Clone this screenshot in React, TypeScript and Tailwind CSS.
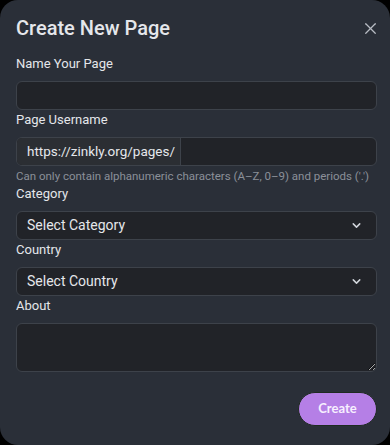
import { X, ChevronDown } from "lucide-react";

const inputBox =
  "w-full rounded-md border border-[#3d424a] bg-[#212328] text-[14px] text-[#e5e7eb] outline-none";

function Label({ children }: { children: React.ReactNode }) {
  return <label className="block text-[13px] leading-5 text-[#e4e6ea]">{children}</label>;
}

function SelectBox({ placeholder }: { placeholder: string }) {
  return (
    <div className={`${inputBox} h-[29px] mt-[7px] flex items-center justify-between pl-[10px] pr-[13px]`}>
      <span>{placeholder}</span>
      <ChevronDown className="w-[13px] h-[13px] text-[#d1d5db]" strokeWidth={2.75} />
    </div>
  );
}

export default function App() {
  return (
    <div className="w-[390px] h-[445px] bg-black" style={{ fontFamily: "Roboto, 'Noto Sans', sans-serif" }}>
      <div className="h-full rounded-[18px] bg-[#2a2f38] pl-4 pr-[13px] pt-[14px] flex flex-col">
        <div className="flex items-center justify-between">
          <h2 className="text-[20px] leading-7 font-medium text-[#e5e7eb]">Create New Page</h2>
          <X className="w-[19px] h-[19px] text-[#b8bcc4] mr-[-3px]" strokeWidth={1.6} />
        </div>

        <div className="mt-3">
          <Label>Name Your Page</Label>
          <div className={`${inputBox} h-[29px] mt-[7px]`} />
        </div>

        <div>
          <Label>Page Username</Label>
          <div className={`${inputBox} h-[29px] mt-[7px] flex overflow-hidden`}>
            <span className="w-[164px] flex items-center pl-[10px] text-[13.5px] bg-[#2b2e33] border-r border-[#3d424a] shrink-0">
              https://zinkly.org/pages/
            </span>
            <span className="flex-1" />
          </div>
          <p className="mt-[2px] text-[11.5px] leading-4 text-[#8b9099]">
            Can only contain alphanumeric characters (A–Z, 0–9) and periods ('.')
          </p>
        </div>

        <div>
          <Label>Category</Label>
          <SelectBox placeholder="Select Category" />
        </div>

        <div>
          <Label>Country</Label>
          <SelectBox placeholder="Select Country" />
        </div>

        <div>
          <Label>About</Label>
          <textarea className={`${inputBox} mt-[7px] block h-[49px]`} />
        </div>

        <div className="flex justify-end mt-5">
          <button
            className="h-[34px] w-[79px] rounded-full bg-[#b57fe6] border border-[#1f2a22] text-[13px] font-bold text-[#f7efff]"
            style={{ fontFamily: "Lato, sans-serif" }}
          >
            Create
          </button>
        </div>
      </div>
    </div>
  );
}
